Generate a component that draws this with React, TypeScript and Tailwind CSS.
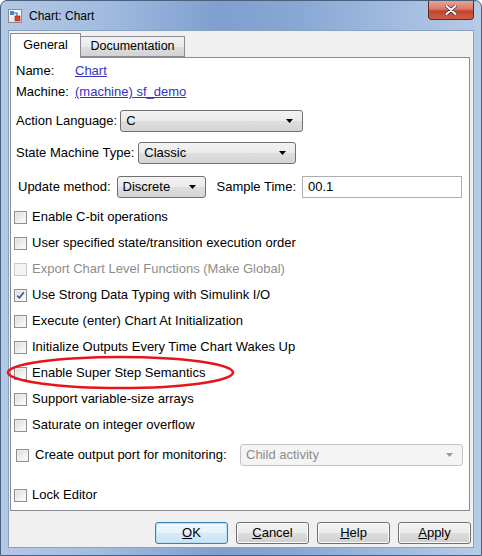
import React from "react";

const FONT = { fontFamily: '"Liberation Sans", Arial, sans-serif' };

function Checkbox({ checked = false, disabled = false }: { checked?: boolean; disabled?: boolean }) {
  return (
    <div
      className={
        "w-[13px] h-[13px] shrink-0 border flex items-center justify-center " +
        (disabled
          ? "border-[#c9c9c9] bg-[#f4f4f4]"
          : "border-[#8e8f8f] bg-[linear-gradient(135deg,#dcdcdc_0%,#f4f4f4_70%,#ffffff_100%)]")
      }
    >
      <div
        className={
          "w-[11px] h-[11px] border flex items-center justify-center " +
          (disabled ? "border-[#f4f4f4]" : "border-[#f4f4f4]/60")
        }
      >
        {checked && (
          <svg width="9" height="9" viewBox="0 0 9 9">
            <path d="M1.2 4.6 L3.4 6.8 L7.8 1.4" fill="none" stroke="#3b5a9a" strokeWidth="1.7" />
          </svg>
        )}
      </div>
    </div>
  );
}

function Arrow({ color = "#000" }: { color?: string }) {
  return (
    <svg width="7" height="4" viewBox="0 0 7 4">
      <path d="M0 0 L7 0 L3.5 4 Z" fill={color} />
    </svg>
  );
}

function Dropdown({ label, w, disabled = false }: { label: string; w: string; disabled?: boolean }) {
  return (
    <div
      className={
        w +
        " h-[22px] rounded-[3px] border flex items-center pl-[5px] pr-[9px] text-[13px] " +
        (disabled
          ? "border-[#c3c3c3] bg-[#f4f4f4] text-[#8d8d8d]"
          : "border-[#707070] bg-[linear-gradient(180deg,#f2f2f2_0%,#ebebeb_50%,#dedede_51%,#d4d4d4_100%)] text-black")
      }
    >
      <span className="flex-1">{label}</span>
      <Arrow color={disabled ? "#9a9a9a" : "#000"} />
    </div>
  );
}

function CheckRow({ label, checked, disabled }: { label: string; checked?: boolean; disabled?: boolean }) {
  return (
    <div className="h-[26px] flex items-center gap-[5px] pl-[3px]">
      <Checkbox checked={checked} disabled={disabled} />
      <span className={"text-[13px] " + (disabled ? "text-[#8d8d8d]" : "text-black")}>{label}</span>
    </div>
  );
}

function Btn({ children, focused = false }: { children: React.ReactNode; focused?: boolean }) {
  return (
    <div
      className={
        "w-[73px] h-[22px] rounded-[3px] border flex items-center justify-center text-[13px] text-black " +
        (focused
          ? "border-[#3c7fb1] bg-[linear-gradient(180deg,#f0f8fd_0%,#e6f2fa_50%,#d6e9f6_51%,#cce3f3_100%)] shadow-[inset_0_0_0_1px_#b9e1f7]"
          : "border-[#707070] bg-[linear-gradient(180deg,#f2f2f2_0%,#ebebeb_50%,#dddddd_51%,#cfcfcf_100%)] shadow-[inset_0_0_0_1px_#fcfcfc]")
      }
    >
      {children}
    </div>
  );
}

export default function App() {
  return (
    <div style={FONT} className="relative w-[482px] h-[556px] overflow-hidden">
      <div className="w-[482px] h-[556px] rounded-t-[7px] border border-[#4b5f7e] bg-[linear-gradient(90deg,#b3c8e4_0%,#a3bde0_20%,#7f9fcf_45%,#86a6d3_60%,#a4bee0_85%,#b6cbe6_100%)] flex flex-col px-[7px] pb-[7px]">
        {/* title bar */}
        <div className="h-[29px] flex items-center shrink-0">
          <div className="w-[14px] h-[14px] mt-[1px] border border-[#8a8a8a] bg-[linear-gradient(180deg,#ffffff,#e4e4e4)] relative">
            <svg width="14" height="14" viewBox="0 0 14 14" className="absolute -left-[1px] -top-[1px]">
              <rect x="2" y="2" width="4" height="4" fill="#3a8ad8" />
              <path d="M6 4 H9 V7" stroke="#2f6fb8" strokeWidth="1.2" fill="none" />
              <rect x="7" y="7" width="5" height="5" fill="#e0402a" stroke="#a02010" strokeWidth="0.6" />
            </svg>
          </div>
          <span className="ml-[7px] text-[12px] text-black">Chart: Chart</span>
          <div className="ml-auto self-start w-[46px] h-[19px] rounded-b-[4px] border border-t-0 border-[#5c2a24] bg-[linear-gradient(180deg,#e7a496_0%,#d97a68_45%,#c2452f_55%,#cf5d44_100%)] flex items-center justify-center">
            <svg width="12" height="10" viewBox="0 0 12 10">
              <path d="M1.5 1 L10.5 9 M10.5 1 L1.5 9" stroke="#3d2a2a" strokeWidth="3.4" strokeLinecap="round" />
              <path d="M1.5 1 L10.5 9 M10.5 1 L1.5 9" stroke="#ffffff" strokeWidth="2" strokeLinecap="round" />
            </svg>
          </div>
        </div>

        {/* content */}
        <div className="flex-1 bg-[#f0f0f0] border border-[#8aa0bf] flex flex-col">
          {/* tabs */}
          <div className="flex items-end h-[25px] pl-[1px] mt-[2px] relative z-10">
            <div className="w-[71px] h-[25px] bg-white border border-[#898c95] border-b-0 flex items-center justify-center text-[12.5px] text-black pb-[1px]">
              General
            </div>
            <div className="w-[104px] h-[21px] mb-[1px] border border-l-0 border-[#898c95] bg-[linear-gradient(180deg,#f2f2f2_0%,#ebebeb_50%,#dddddd_51%,#d3d3d3_100%)] flex items-center justify-center text-[12.5px] text-black">
              Documentation
            </div>
          </div>
          {/* panel */}
          <div className="ml-[1px] mr-[3px] h-[454px] -mt-[1px] bg-white border border-[#898c95] flex flex-col">
            <div className="h-[3px]" />
            <div className="h-[20px] flex items-center pl-[5px] text-[13px]">
              <span className="w-[59px]">Name:</span>
              <span className="text-[#3535c0] underline">Chart</span>
            </div>
            <div className="h-[22px] flex items-center pl-[5px] text-[13px]">
              <span className="w-[59px]">Machine:</span>
              <span className="text-[#3535c0] underline">(machine) sf_demo</span>
            </div>
            <div className="mt-[7px] flex items-center gap-[3px] pl-[5px] text-[13px]">
              <span>Action Language:</span>
              <Dropdown label="C" w="w-[183px]" />
            </div>
            <div className="mt-[10px] flex items-center gap-[4px] pl-[5px] text-[13px]">
              <span>State Machine Type:</span>
              <Dropdown label="Classic" w="w-[158px]" />
            </div>
            <div className="mt-[12px] flex items-center pl-[7px] text-[13px]">
              <span className="mr-[6px]">Update method:</span>
              <Dropdown label="Discrete" w="w-[89px]" />
              <span className="ml-[11px] mr-[6px]">Sample Time:</span>
              <div className="w-[160px] h-[22px] border border-[#abadb3] bg-white flex items-center pl-[5px]">00.1</div>
            </div>
            <div className="mt-[6px] flex flex-col">
              <CheckRow label="Enable C-bit operations" />
              <CheckRow label="User specified state/transition execution order" />
              <CheckRow label="Export Chart Level Functions (Make Global)" disabled />
              <CheckRow label="Use Strong Data Typing with Simulink I/O" checked />
              <CheckRow label="Execute (enter) Chart At Initialization" />
              <CheckRow label="Initialize Outputs Every Time Chart Wakes Up" />
              <CheckRow label="Enable Super Step Semantics" />
              <CheckRow label="Support variable-size arrays" />
              <CheckRow label="Saturate on integer overflow" />
              <div className="h-[34px] flex items-center pl-[5px]">
                <Checkbox />
                <span className="ml-[6px] text-[13px] w-[205px]">Create output port for monitoring:</span>
                <Dropdown label="Child activity" w="w-[223px]" disabled />
              </div>
              <div className="h-[10px]" />
              <CheckRow label="Lock Editor" />
            </div>
          </div>
          {/* buttons */}
          <div className="flex justify-end gap-[8px] pr-[2px] mt-[11px]">
            <Btn focused>
              <span><u>O</u>K</span>
            </Btn>
            <Btn>
              <span><u>C</u>ancel</span>
            </Btn>
            <Btn>
              <span><u>H</u>elp</span>
            </Btn>
            <Btn>
              <span><u>A</u>pply</span>
            </Btn>
          </div>
        </div>
      </div>
      {/* red annotation ellipse */}
      <svg className="absolute left-0 top-[354px] pointer-events-none" width="240" height="36" viewBox="0 0 240 36">
        <ellipse cx="120.5" cy="18.5" rx="112.5" ry="15.5" fill="none" stroke="#e8141b" strokeWidth="2.6" />
      </svg>
    </div>
  );
}
